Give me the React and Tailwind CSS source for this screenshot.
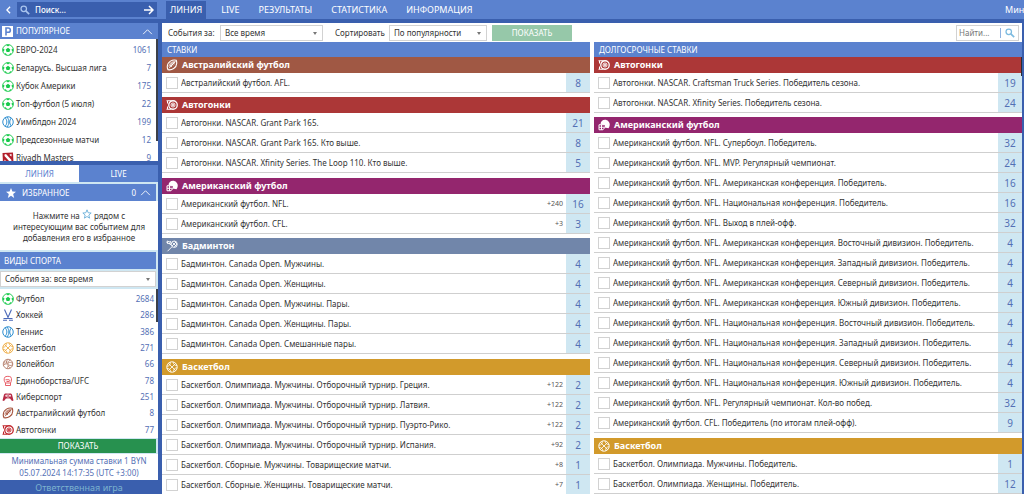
import { useState } from "react";

const TOP_TABS = ["ЛИНИЯ", "LIVE", "РЕЗУЛЬТАТЫ", "СТАТИСТИКА", "ИНФОРМАЦИЯ"];

const POPULAR = [
  { icon: "soccer", name: "ЕВРО-2024", count: 1061 },
  { icon: "soccer", name: "Беларусь. Высшая лига", count: 7 },
  { icon: "soccer", name: "Кубок Америки", count: 175 },
  { icon: "soccer", name: "Топ-футбол (5 июля)", count: 22 },
  { icon: "tennis", name: "Уимблдон 2024", count: 199 },
  { icon: "soccer", name: "Предсезонные матчи", count: 12 },
  { icon: "dota", name: "Riyadh Masters", count: 9 },
];

const SPORTS = [
  { icon: "soccer", name: "Футбол", count: 2684 },
  { icon: "hockey", name: "Хоккей", count: 286 },
  { icon: "tennis", name: "Теннис", count: 386 },
  { icon: "basketball", name: "Баскетбол", count: 271 },
  { icon: "volleyball", name: "Волейбол", count: 66 },
  { icon: "glove", name: "Единоборства/UFC", count: 78 },
  { icon: "gamepad", name: "Киберспорт", count: 251 },
  { icon: "rugby", name: "Австралийский футбол", count: 8 },
  { icon: "racing", name: "Автогонки", count: 77 },
];

const BETS = [
  {
    sport: "Австралийский футбол",
    icon: "rugby",
    rows: [{ name: "Австралийский футбол. AFL.", count: 8 }],
  },
  {
    sport: "Автогонки",
    icon: "racing",
    rows: [
      { name: "Автогонки. NASCAR. Grant Park 165.", count: 21 },
      { name: "Автогонки. NASCAR. Grant Park 165. Кто выше.", count: 8 },
      { name: "Автогонки. NASCAR. Xfinity Series. The Loop 110. Кто выше.", count: 5 },
    ],
  },
  {
    sport: "Американский футбол",
    icon: "helmet",
    rows: [
      { name: "Американский футбол. NFL.", extra: "+240", count: 16 },
      { name: "Американский футбол. CFL.", extra: "+3", count: 3 },
    ],
  },
  {
    sport: "Бадминтон",
    icon: "badminton",
    rows: [
      { name: "Бадминтон. Canada Open. Мужчины.", count: 4 },
      { name: "Бадминтон. Canada Open. Женщины.", count: 4 },
      { name: "Бадминтон. Canada Open. Мужчины. Пары.", count: 4 },
      { name: "Бадминтон. Canada Open. Женщины. Пары.", count: 4 },
      { name: "Бадминтон. Canada Open. Смешанные пары.", count: 4 },
    ],
  },
  {
    sport: "Баскетбол",
    icon: "basketball",
    rows: [
      { name: "Баскетбол. Олимпиада. Мужчины. Отборочный турнир. Греция.", extra: "+122", count: 2 },
      { name: "Баскетбол. Олимпиада. Мужчины. Отборочный турнир. Латвия.", extra: "+122", count: 2 },
      { name: "Баскетбол. Олимпиада. Мужчины. Отборочный турнир. Пуэрто-Рико.", extra: "+122", count: 2 },
      { name: "Баскетбол. Олимпиада. Мужчины. Отборочный турнир. Испания.", extra: "+92", count: 2 },
      { name: "Баскетбол. Сборные. Мужчины. Товарищеские матчи.", extra: "+8", count: 1 },
      { name: "Баскетбол. Сборные. Женщины. Товарищеские матчи.", extra: "+7", count: 1 },
    ],
  },
];

const LONG_TERM = [
  {
    sport: "Автогонки",
    icon: "racing",
    rows: [
      { name: "Автогонки. NASCAR. Craftsman Truck Series. Победитель сезона.", count: 19 },
      { name: "Автогонки. NASCAR. Xfinity Series. Победитель сезона.", count: 24 },
    ],
  },
  {
    sport: "Американский футбол",
    icon: "helmet",
    rows: [
      { name: "Американский футбол. NFL. Супербоул. Победитель.", count: 32 },
      { name: "Американский футбол. NFL. MVP. Регулярный чемпионат.", count: 24 },
      { name: "Американский футбол. NFL. Американская конференция. Победитель.", count: 16 },
      { name: "Американский футбол. NFL. Национальная конференция. Победитель.", count: 16 },
      { name: "Американский футбол. NFL. Выход в плей-офф.", count: 32 },
      { name: "Американский футбол. NFL. Американская конференция. Восточный дивизион. Победитель.", count: 4 },
      { name: "Американский футбол. NFL. Американская конференция. Западный дивизион. Победитель.", count: 4 },
      { name: "Американский футбол. NFL. Американская конференция. Северный дивизион. Победитель.", count: 4 },
      { name: "Американский футбол. NFL. Американская конференция. Южный дивизион. Победитель.", count: 4 },
      { name: "Американский футбол. NFL. Национальная конференция. Восточный дивизион. Победитель.", count: 4 },
      { name: "Американский футбол. NFL. Национальная конференция. Западный дивизион. Победитель.", count: 4 },
      { name: "Американский футбол. NFL. Национальная конференция. Северный дивизион. Победитель.", count: 4 },
      { name: "Американский футбол. NFL. Национальная конференция. Южный дивизион. Победитель.", count: 4 },
      { name: "Американский футбол. NFL. Регулярный чемпионат. Кол-во побед.", count: 32 },
      { name: "Американский футбол. CFL. Победитель (по итогам плей-офф).", count: 9 },
    ],
  },
  {
    sport: "Баскетбол",
    icon: "basketball",
    rows: [
      { name: "Баскетбол. Олимпиада. Мужчины. Победитель.", count: 1 },
      { name: "Баскетбол. Олимпиада. Женщины. Победитель.", count: 12 },
    ],
  },
];

const SPORT_BG = {
  rugby: "bg-[#a05844]",
  racing: "bg-[#ac3737]",
  helmet: "bg-[#94266e]",
  badminton: "bg-[#7186aa]",
  basketball: "bg-[#d29a2b]",
};

const ICON_COLOR = {
  soccer: "text-[#16c94a]",
  tennis: "text-[#2f8fd0]",
  dota: "text-[#b3202c]",
  hockey: "text-[#4a68b8]",
  basketball: "text-[#eda93c]",
  volleyball: "text-[#b98572]",
  glove: "text-[#e8606a]",
  gamepad: "text-[#b72a45]",
  rugby: "text-[#a4503a]",
  racing: "text-[#c0272d]",
};

const SHAPES = {
  soccer: (
    <>
      <circle cx="12" cy="12" r="10.8" fill="none" stroke="currentColor" strokeWidth="1.8" />
      <path d="M12 7.500l4.600 3.300-1.800 5.400H9.200l-1.800-5.400z" fill="currentColor" />
      <path d="M8 1.500h8L12 5zM22.500 9l-.5 7-3.500-4.500zM1.500 9l.5 7 3.500-4.500zM5 20.500l2.500-2.500 2.500 4.500zM19 20.500L16.500 18 14 22.500z" fill="currentColor" />
    </>
  ),
  tennis: (
    <g fill="none" stroke="currentColor" strokeWidth="2">
      <circle cx="12" cy="12" r="10.5" />
      <path d="M6 3.500c5 5 5 12 0 17M10 2c5 6 5 14 0 20M18.500 4c-4 5-4 11 0 16" />
    </g>
  ),
  dota: (
    <>
      <path d="M1 2l21-1 1 21-21 1z" fill="currentColor" />
      <path d="M5 5l3-1 11 12-1 4-3-1L5 8zM15 5l4-1v5l-3-2zM5 15l4 4-4 1z" fill="#fff" />
    </>
  ),
  hockey: (
    <path d="M5 1l8 18h8M19 1l-8 18H3M2 22.500h8M14 22.500h8" fill="none" stroke="currentColor" strokeWidth="2.200" />
  ),
  basketball: (
    <g fill="none" stroke="currentColor" strokeWidth="1.700">
      <circle cx="12" cy="12" r="10.500" />
      <path d="M4.500 4.700l15 14.600M19.500 4.700l-15 14.600M8.500 2.200c.5 5-1.500 7.800-6.700 8.300M15.500 21.800c-.5-5 1.500-7.800 6.700-8.300M14 1.700c.5 4.500 3.500 7.300 8.300 7.800M10 22.300c-.5-4.500-3.500-7.300-8.300-7.800" />
    </g>
  ),
  volleyball: (
    <g fill="none" stroke="currentColor" strokeWidth="2">
      <circle cx="12" cy="12" r="9.500" />
      <path d="M12 12C11 8 13 5 17 4M12 12c-4-1-7 0-9.500 3.500M12 12c1 4-.5 7-3 9M9 10.500C8.500 7 9.500 4.500 12 2.500M21.500 11c-3-2.500-6-3-9-1.500M13.500 14c3 1.500 5.500 1 8-.5M6 5.500c-1 3-.5 4.500 0 6M17 19.500c-3-.5-4-2-4.500-4" />
    </g>
  ),
  glove: (
    <path
      d="M7 16c-3-3-3.500-8-1.500-11.500C7.500 2 16 2 18 4.500c1.800 3.500 1 8-1 11.500zM7 16v5h10v-5M7 9.500h7c2 0 2 3.500 0 3.500H9"
      fill="none"
      stroke="currentColor"
      strokeWidth="2"
    />
  ),
  gamepad: (
    <>
      <path d="M6 5h12l2 2 3 12-3 1-4-5H8l-4 5-3-1L4 7z" fill="currentColor" />
      <path d="M6 9.500h5M8.500 7v5M12 5v10" stroke="#fff" strokeWidth="1.400" />
      <circle cx="16" cy="9.500" r="1.800" fill="#fff" />
    </>
  ),
  rugby: (
    <>
      <path d="M20.500 2.500C13 .5 3 5 2.500 15.500c0 2 .5 4 1.500 6 7.500 1.500 17-3.500 17.500-13 0-2-.3-4-1-6z" fill="none" stroke="currentColor" strokeWidth="2.200" />
      <path d="M19.500 4.500C13 3 5 8 4.700 16c5-1 12.500-5 14.800-11.500z" fill="currentColor" opacity=".55" />
      <path d="M6 18.500L18.500 5M8.500 12.500l3.500 3M11 9.500l3.500 3M13.500 7l3.500 3" stroke="currentColor" strokeWidth="1.800" />
    </>
  ),
  racing: (
    <>
      <circle cx="14" cy="12" r="8.500" fill="none" stroke="currentColor" strokeWidth="2.600" />
      <circle cx="14" cy="12" r="4.200" fill="none" stroke="currentColor" strokeWidth="1.600" />
      <path d="M14 8v8M10 12h8M11.200 9.200l5.600 5.600M16.800 9.200l-5.600 5.600" stroke="currentColor" strokeWidth="1.200" />
      <path d="M1 3.500h10M3 4v5M3 15v5M1 20.500h10" stroke="currentColor" strokeWidth="2" />
    </>
  ),
  helmet: (
    <>
      <path d="M5 11C5 5 9 1.500 14 1.500S23.500 6 23.500 11c0 3-1 5.500-2.500 7.500l-8-1.500 1-5z" fill="currentColor" />
      <path d="M14 11.500H2v10h8l4-5M2 16.500h11M7 11.500v10" fill="none" stroke="currentColor" strokeWidth="2" />
    </>
  ),
  badminton: (
    <g fill="none" stroke="currentColor" strokeWidth="1.800">
      <ellipse cx="16.500" cy="8.500" rx="6" ry="6.500" />
      <path d="M12 13.500L3 22.500M13 5l7.500 7.500M17 3l5 5M20 4l-8 8M22 8l-5.500 6M2 2l6 2M2 2l2 6M1 5l7 3 1-6M6 6l4 4" />
    </g>
  ),
};

const SportIcon = ({ name, className }) => (
  <svg viewBox="0 0 24 24" className={className} aria-hidden="true">
    {SHAPES[name]}
  </svg>
);

const Chevron = () => (
  <svg viewBox="0 0 12 8" className="h-[7px] w-[11px]" aria-hidden="true">
    <path d="M1 7l5-5 5 5" fill="none" stroke="currentColor" strokeWidth="1" />
  </svg>
);

const Magnifier = ({ className }) => (
  <svg viewBox="0 0 12 12" className={className} aria-hidden="true">
    <circle cx="4.500" cy="4.500" r="3.300" fill="none" stroke="currentColor" strokeWidth="1.500" />
    <path d="M7 7l4 4" stroke="currentColor" strokeWidth="2" />
  </svg>
);

const Select = ({ id, value, label, className }) => (
  <span className={`relative flex h-4 ${className}`}>
    <select id={id} aria-label={label} className="w-full appearance-none border border-[#d2d2d2] bg-white pl-1 text-[#333]">
      <option>{value}</option>
    </select>
    <svg viewBox="0 0 4 3" className="pointer-events-none absolute right-[6px] top-[7px] h-[3px] w-1" aria-hidden="true">
      <path d="M0 0h4L2 3z" fill="#777" />
    </svg>
  </span>
);

const CountList = ({ items, rowClass }) =>
  items.map((item) => (
    <li key={item.name} className={rowClass}>
      <a href="#" className="flex w-full items-center pl-[2px]">
        <SportIcon name={item.icon} className={`mr-[2px] h-3 w-3 shrink-0 ${ICON_COLOR[item.icon]}`} />
        <span className="flex-1">{item.name}</span>
        <span className="text-[#5470b5]">{item.count}</span>
      </a>
    </li>
  ));

const Section = ({ section }) => (
  <section className={section.rows.length > 2 ? "mb-[5px]" : "mb-1"}>
    <h3 className={`flex h-4 items-center gap-1 pl-1 text-[9px] font-bold text-white ${SPORT_BG[section.icon]}`}>
      <SportIcon name={section.icon} className="h-3 w-3" />
      {section.sport}
    </h3>
    {section.rows.map((row) => (
      <label key={row.name} className="flex h-5 items-center border-b border-[#cfcfcf]">
        <input type="checkbox" className="ml-1 mr-[3px] h-3 w-3 shrink-0 appearance-none border border-[#d2d2d2] bg-white" />
        <span className="min-w-0 flex-1 truncate">{row.name}</span>
        <span className="pr-[3px] text-[7px] text-[#555]">{row.extra}</span>
        <span className="flex w-6 items-center justify-center self-stretch bg-[#cfe7f2] text-[10px] text-[#5470b5]">
          {row.count}
        </span>
      </label>
    ))}
  </section>
);

const Column = ({ title, sections }) => (
  <div className="min-w-0 flex-1">
    <h2 className="flex h-[15px] items-center bg-[#5b82cf] pl-[5px] text-white">{title}</h2>
    {sections.map((s) => (
      <Section key={s.sport} section={s} />
    ))}
  </div>
);

const Sidebar = () => {
  const [tab, setTab] = useState("ЛИНИЯ");

  return (
    <aside className="flex w-[158px] shrink-0 flex-col">
      <div className="mb-1 flex h-[19px] items-center bg-[#5b82cf] pr-px text-white">
        <button aria-label="Назад" className="flex h-4 w-[17px] shrink-0 items-center justify-center">
          <svg viewBox="0 0 6 10" className="h-2 w-[5px]" aria-hidden="true">
            <path d="M5 1L1 5l4 4" fill="none" stroke="currentColor" strokeWidth="1.600" />
          </svg>
        </button>
        <div className="flex h-[15px] min-w-0 flex-1 items-center bg-[#3a5fae] px-[3px]">
          <Magnifier className="h-[10px] w-[10px] shrink-0 text-[#a9c4ee]" />
          <input
            aria-label="Поиск"
            placeholder="Поиск..."
            className="ml-[5px] w-0 min-w-0 flex-1 font-medium placeholder:text-white"
          />
          <button aria-label="Найти" className="shrink-0">
            <svg viewBox="0 0 10 10" className="h-[10px] w-[10px]" aria-hidden="true">
              <path d="M0 5h9M5 1l4 4-4 4" fill="none" stroke="currentColor" strokeWidth="1.500" />
            </svg>
          </button>
        </div>
      </div>

      {/* popular */}
      <div className="flex h-4 items-center bg-[#5b82cf] pl-[2px] pr-[5px] text-white">
        <svg viewBox="0 0 11 11" className="h-[11px] w-[11px]" aria-hidden="true">
          <path d="M0 0h11v11H0z" fill="#fff" />
          <path d="M4 9.500V2h2.200a2.100 2.100 0 0 1 0 4.300H4" fill="none" stroke="#5b82cf" strokeWidth="1.600" />
        </svg>
        <h2 className="ml-[3px] flex-1">ПОПУЛЯРНОЕ</h2>
        <Chevron />
      </div>
      <div className="relative h-[122px] overflow-hidden bg-white pt-[2px] text-[#333]">
        <ul>
          <CountList items={POPULAR} rowClass="flex h-[18px] pr-[7px]" />
        </ul>
        <span className="absolute right-0 top-0 h-[102px] w-[2px] bg-[#3c4049]" />
      </div>

      <div className="mt-1 flex h-[17px]">
        {["ЛИНИЯ", "LIVE"].map((t) => (
          <button
            key={t}
            onClick={() => setTab(t)}
            className={`flex-1 ${tab === t ? "bg-white text-[#5b82cf]" : "bg-[#5b82cf] text-white"}`}
          >
            {t}
          </button>
        ))}
      </div>

      {/* favourites */}
      <div className="bg-[#cfe7f2] pr-[2px] pt-[2px]">
        <div className="flex h-[17px] items-center bg-[#5b82cf] pl-[6px] pr-[5px] text-white">
          <svg viewBox="0 0 12 12" className="h-[10px] w-[10px]" aria-hidden="true">
            <path d="M6 0l1.700 4.200 4.300.3-3.400 2.800L9.800 12 6 9.400 2.200 12l1.200-4.700L0 4.500l4.300-.3z" fill="currentColor" />
          </svg>
          <h2 className="ml-[6px] flex-1">ИЗБРАННОЕ</h2>
          <span className="mr-1">0</span>
          <Chevron />
        </div>
      </div>
      <p className="flex h-[49px] flex-col justify-center bg-white text-center leading-[11px] text-[#333]">
        <span className="block">
          Нажмите на{" "}
          <svg viewBox="0 0 12 12" className="inline h-[10px] w-[10px] align-baseline text-[#5fa9d6]" aria-hidden="true">
            <path d="M6 1l1.400 3.500 3.600.3-2.800 2.400.9 3.800L6 9l-3.100 2 .9-3.800L1 4.800l3.600-.3z" fill="none" stroke="currentColor" />
          </svg>{" "}
          рядом с
        </span>
        <span className="block">интересующим вас событием для</span>
        <span className="block">добавления его в избранное</span>
      </p>

      {/* sports */}
      <div className="bg-[#cfe7f2] pb-[2px] pr-[2px] pt-[2px]">
        <h2 className="flex h-[17px] items-center bg-[#5b82cf] pl-1 text-white">ВИДЫ СПОРТА</h2>
        <Select label="Период" value="События за: все время" className="mt-[2px] w-full" />
      </div>
      <div className="relative bg-white pt-[2px] text-[#333]">
        <ul className="flex h-[147px] flex-col">
          <CountList items={SPORTS} rowClass="flex flex-1 pr-1" />
        </ul>
        <span className="absolute right-0 top-0 h-[33px] w-[2px] bg-[#3c4049]" />
      </div>
      <div className="bg-[#cfe7f2] py-px pr-[2px]">
        <button className="block h-[14px] w-full bg-[#27914f] text-white">ПОКАЗАТЬ</button>
      </div>
      <div className="flex h-[26px] flex-col justify-center bg-white text-center leading-3 text-[#5470b5]">
        <p>Минимальная сумма ставки 1 BYN</p>
        <p>05.07.2024 14:17:35 (UTC +3:00)</p>
      </div>
      <a href="#" className="pt-[2px] text-center text-[9px] text-[#7cb3cf]">
        Ответственная игра
      </a>
    </aside>
  );
};

export default function App() {
  const [active, setActive] = useState("ЛИНИЯ");

  return (
    <div className="flex h-screen overflow-hidden whitespace-nowrap bg-[#3a5fae] font-['Noto_Sans','Open_Sans',sans-serif] text-[8px] leading-3">
      <Sidebar />
      <div className="flex min-w-0 flex-1 flex-col">
        <header className="flex h-[23px] items-start border-b-4 border-[#3a5fae] bg-[#5b82cf] text-[9px] text-white">
          <nav className="flex gap-[11px] pl-2">
            {TOP_TABS.map((t) => (
              <a
                key={t}
                href="#"
                onClick={() => setActive(t)}
                className={`mt-px flex h-[18px] items-center px-1 ${active === t ? "bg-[#3a5fae]" : ""}`}
              >
                {t}
              </a>
            ))}
          </nav>
          <a href="#" className="ml-auto mt-1 w-[19px] overflow-hidden">
            Мини
          </a>
        </header>

        <main className="relative ml-1 mr-[2px] flex-1 overflow-hidden bg-white text-[#333]">
          <form className="flex h-[19px] items-center pl-[6px] pr-[3px]" onSubmit={(e) => e.preventDefault()}>
            <label htmlFor="period" className="w-[52px]">
              События за:
            </label>
            <Select id="period" value="Все время" className="w-[103px]" />
            <label htmlFor="order" className="ml-3 w-[54px]">
              Сортировать
            </label>
            <Select id="order" value="По популярности" className="w-[98px]" />
            <button className="ml-[5px] h-4 w-20 bg-[#96c8a9] text-white">ПОКАЗАТЬ</button>
            <div className="ml-auto flex h-4 w-[63px] items-center border border-[#d2d2d2]">
              <input aria-label="Найти" placeholder="Найти..." className="w-[43px] pl-[2px] placeholder:text-[#777]" />
              <button aria-label="Найти" className="border-l border-[#8fb2e0] pl-1 text-[#7dbbe0]">
                <Magnifier className="h-[10px] w-[10px]" />
              </button>
            </div>
          </form>
          <div className="flex gap-1">
            <Column title="СТАВКИ" sections={BETS} />
            <Column title="ДОЛГОСРОЧНЫЕ СТАВКИ" sections={LONG_TERM} />
          </div>
          <span className="absolute right-0 top-[34px] h-[19px] w-px bg-[#2b2b33]" />
        </main>
      </div>
    </div>
  );
}
